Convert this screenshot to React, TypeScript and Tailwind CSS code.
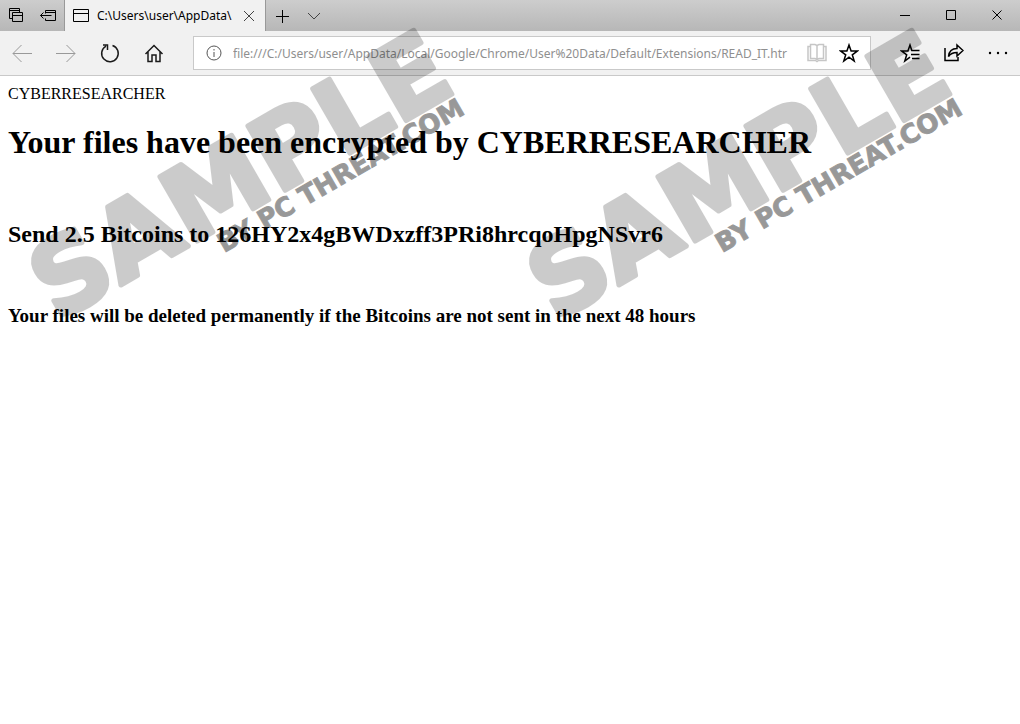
import React from 'react';

const address =
  'file:///C:/Users/user/AppData/Local/Google/Chrome/User%20Data/Default/Extensions/READ_IT.htr';

type IconProps = {
  size?: number;
  className?: string;
  width?: number;
  children: React.ReactNode;
};

function Icon({ size = 20, className = '', width = 1, children }: IconProps) {
  return (
    <svg
      width={size}
      height={size}
      viewBox={`0 0 ${size} ${size}`}
      fill="none"
      stroke="currentColor"
      strokeWidth={width}
      className={`shrink-0 ${className}`}
      aria-hidden="true"
    >
      {children}
    </svg>
  );
}

type ButtonProps = {
  label: string;
  className: string;
  disabled?: boolean;
  children: React.ReactNode;
};

function IconButton({ label, className, disabled, children }: ButtonProps) {
  return (
    <button
      type="button"
      aria-label={label}
      disabled={disabled}
      className={`flex shrink-0 items-center justify-center ${className}`}
    >
      {children}
    </button>
  );
}

function TabBar() {
  return (
    <div className="flex h-[31px] bg-linear-to-b from-[#cdcdcd] to-[#b7b7b7] text-black">
      <IconButton label="Tabs you've set aside" className="w-8">
        <Icon size={16}>
          <path d="M4.5 10.5h-3V.5h10v4M1.5 2.5h10" />
          <path d="M4.5 4.5h10v9h-10zM4.5 7.5h10" />
        </Icon>
      </IconButton>
      <IconButton label="Set these tabs aside" className="w-8">
        <Icon size={16}>
          <path d="M5.5 5.500v-3h10v10h-10v-2M5.500 4.500h10M.5 7.500h11M3.500 4.500l-3 3 3 3" />
        </Icon>
      </IconButton>

      <div className="flex w-[202px] shrink-0 items-center border-x border-[#999999] bg-[#f1f1f1] pl-2">
        <Icon size={16}>
          <path d="M.5 1.5h15v12H.5zM.5 5.5h15" />
        </Icon>
        <span className="ml-2 w-[136px] overflow-hidden font-['Noto_Sans',sans-serif] text-xs whitespace-nowrap">
          C:\Users\user\AppData\
        </span>
        <IconButton label="Close tab" className="h-full w-8 text-[#444444]">
          <Icon size={12}>
            <path d="m1 1 10 10M11 1 1 11" />
          </Icon>
        </IconButton>
      </div>

      <IconButton label="New tab" className="w-8">
        <Icon size={14}>
          <path d="M7.5 1v13M1 7.5h13" />
        </Icon>
      </IconButton>
      <IconButton label="Show tab previews" className="w-8 text-[#444444]">
        <Icon size={14}>
          <path d="m1 4 6 6 6-6" />
        </Icon>
      </IconButton>

      <div className="ml-auto flex">
        <IconButton label="Minimize" className="w-[46px]">
          <Icon size={11}>
            <path d="M0 5.5h10" />
          </Icon>
        </IconButton>
        <IconButton label="Maximize" className="w-[46px]">
          <Icon size={11}>
            <path d="M.5.5h9v9h-9z" />
          </Icon>
        </IconButton>
        <IconButton label="Close" className="w-[46px]">
          <Icon size={11}>
            <path d="m.5.5 9 9M9.500.5l-9 9" />
          </Icon>
        </IconButton>
      </div>
    </div>
  );
}

function Toolbar() {
  return (
    <div className="flex h-[45px] items-stretch border-b border-[#c9c9c9] bg-[#f1f1f1] text-black">
      <IconButton label="Back" disabled className="w-11 text-[#999999]">
        <Icon>
          <path d="M1 10.5h19M9.5 2 1 10.5 9.5 19" />
        </Icon>
      </IconButton>
      <IconButton label="Forward" disabled className="w-11 text-[#999999]">
        <Icon>
          <path d="M0 10.5h19M10.5 2l8.500 8.500-8.500 8.500" />
        </Icon>
      </IconButton>
      <IconButton label="Refresh" className="w-11 text-[#1a1a1a]">
        <Icon width={1.5}>
          <path d="M12.500 2.500a8.300 8.300 0 1 1-6.500.6M3 2h4.500v5" />
        </Icon>
      </IconButton>
      <IconButton label="Home" className="w-11 text-[#1a1a1a]">
        <Icon width={1.5}>
          <path d="m1.500 11 8.500-8.500 8.500 8.500M4 9v9.500h4V12h4v6.500h4V9" />
        </Icon>
      </IconButton>

      <div className="mx-[17px] my-[5px] flex min-w-0 flex-1 items-center border border-[#c9c9c9] bg-white pr-[5px] pl-3">
        <Icon size={16} className="text-[#555555]">
          <circle cx="8" cy="8" r="7" />
          <path d="M8 7v5M8 4v1.500" />
        </Icon>
        <input
          type="text"
          aria-label="Address"
          defaultValue={address}
          spellCheck={false}
          className="ml-[11px] h-full min-w-0 flex-1 bg-transparent font-['Noto_Sans',sans-serif] text-xs text-[#8f8f8f] outline-none"
        />
        <IconButton label="Reading view" className="h-full w-8 text-[#c6c6c6]">
          <Icon width={1.5}>
            <path d="M3.500 1.500H8l2 1 2-1h4.500v14H12l-2 1-2-1H3.500zM10 2.500v14" />
            <path d="M3.500 3.500H1v14h7.500l1.500 1 1.500-1H19v-14h-2.500" />
          </Icon>
        </IconButton>
        <IconButton label="Add to favorites" className="h-full w-8">
          <Icon width={1.5}>
            <path d="m10 2 2.100 6h6.200l-5 3.800 1.900 6.200-5.200-3.800-5.200 3.800 1.900-6.200-5-3.800h6.200z" />
          </Icon>
        </IconButton>
      </div>

      <IconButton label="Hub" className="w-11">
        <Icon width={1.5}>
          <path d="M19.500 7.500h-7.700L10 2 7.900 8H1.700l5 3.800L4.800 18l5.200-3.800M11 11.500h8.500M12 15.500h7.500" />
        </Icon>
      </IconButton>
      <IconButton label="Share" className="w-11">
        <Icon width={1.5}>
          <path d="M1 5v12.500h13V14" />
          <path d="M13 2l6 5.500-6 5.500v-3.500c-4 0-6.500 1-8.500 4 .5-5 3.500-8 8.500-8z" />
        </Icon>
      </IconButton>
      <IconButton label="Settings and more" className="w-11">
        <Icon>
          <g fill="currentColor" stroke="none">
            <circle cx="2" cy="10" r="1.200" />
            <circle cx="10" cy="10" r="1.200" />
            <circle cx="18" cy="10" r="1.200" />
          </g>
        </Icon>
      </IconButton>
    </div>
  );
}

function Watermark({ className }: { className: string }) {
  return (
    <svg
      width="500"
      height="360"
      viewBox="0 0 500 360"
      className={`pointer-events-none absolute top-0 overflow-visible font-['DejaVu_Sans',sans-serif] font-bold ${className}`}
    >
      <text
        transform="translate(57 322) rotate(-30)"
        fontSize="102"
        stroke="black"
        strokeWidth="5"
        strokeLinejoin="round"
        opacity="0.2"
      >
        SAMPLE
      </text>
      <text
        transform="translate(224 253) rotate(-30)"
        fontSize="26"
        stroke="black"
        opacity="0.4"
      >
        BY PC THREAT.COM
      </text>
    </svg>
  );
}

export default function App() {
  return (
    <div className="relative min-h-screen bg-white">
      <TabBar />
      <Toolbar />
      <main className="px-2 pt-2 font-['Liberation_Serif',serif] text-black">
        <p className="text-base leading-5">CYBERRESEARCHER</p>
        <h1 className="mt-5 text-[32px] leading-9 font-bold">
          Your files have been encrypted by CYBERRESEARCHER
        </h1>
        <h2 className="mt-15 text-2xl leading-7 font-bold">
          Send 2.5 Bitcoins to 126HY2x4gBWDxzff3PRi8hrcqoHpgNSvr6
        </h2>
        <h3 className="mt-14 text-[19px] leading-6 font-bold">
          Your files will be deleted permanently if the Bitcoins are not sent in the next 48 hours
        </h3>
      </main>
      <Watermark className="left-0" />
      <Watermark className="left-[498px]" />
    </div>
  );
}
